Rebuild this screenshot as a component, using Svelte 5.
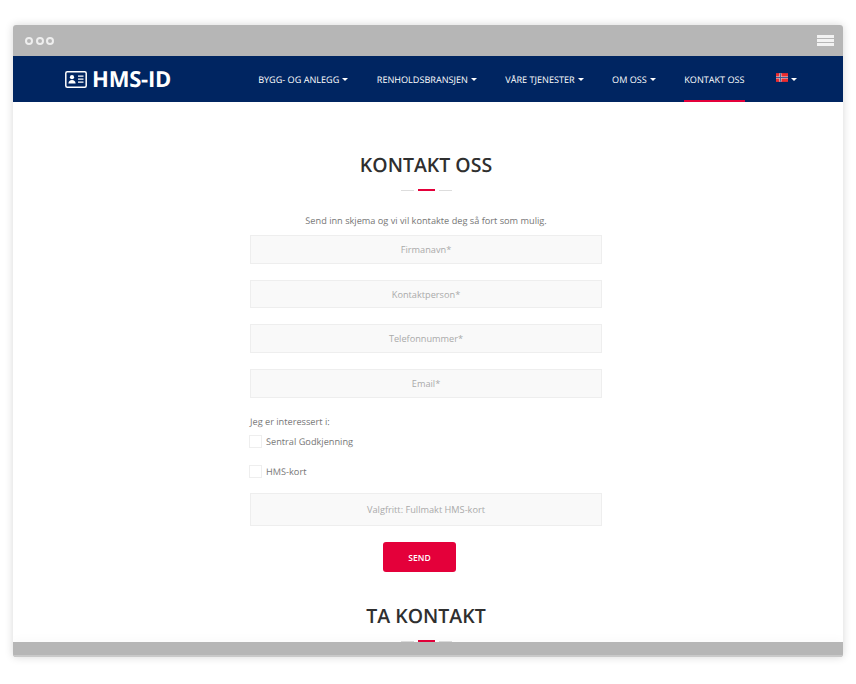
<script>
    const menu = [
        { label: 'BYGG- OG ANLEGG', caret: true },
        { label: 'RENHOLDSBRANSJEN', caret: true },
        { label: 'VÅRE TJENESTER', caret: true },
        { label: 'OM OSS', caret: true },
        { label: 'KONTAKT OSS', active: true }
    ]
    const fields = ['Firmanavn*', 'Kontaktperson*', 'Telefonnummer*', 'Email*']
    const checks = ['Sentral Godkjenning', 'HMS-kort']
</script>

<div class="frame">
    <div class="chrome">
        <div class="dots"><span></span><span></span><span></span></div>
        <div class="bars"><span></span><span></span><span></span></div>
    </div>

    <nav class="nav">
        <div class="logo">
            <svg class="logo__icon" viewBox="0 0 22 17" width="22" height="17">
                <rect x="0.8" y="0.8" width="20.4" height="15.4" rx="1.5" fill="none" stroke="#fff" stroke-width="1.5"/>
                <circle cx="7" cy="6.2" r="2.1" fill="#fff"/>
                <path d="M3.4 12.6c0-2.4 1.5-3.6 3.6-3.6s3.6 1.2 3.6 3.6z" fill="#fff"/>
                <path d="M13 5.2h5.5M13 8.2h5.5M13 11.2h5.5" stroke="#fff" stroke-width="1.3"/>
            </svg>
            <span class="logo__text">HMS-ID</span>
        </div>
        <ul class="menu">
            {#each menu as item}
                <li class="menu__item" class:active={item.active}>
                    {item.label}
                    {#if item.caret}<i class="caret"></i>{/if}
                </li>
            {/each}
            <li class="menu__item">
                <svg class="flag" viewBox="0 0 22 16" width="12" height="9">
                    <rect width="22" height="16" fill="#ef2b2d"/>
                    <path d="M6 0h4v16H6zM0 6h22v4H0z" fill="#d9dde6"/>
                    <path d="M7 0h2v16H7zM0 7h22v2H0z" fill="#3b5a94"/>
                </svg>
                <i class="caret"></i>
            </li>
        </ul>
    </nav>

    <main class="content">
        <h2 class="title first">KONTAKT OSS</h2>
        <div class="rule"><span></span><span class="red"></span><span></span></div>
        <p class="lead">Send inn skjema og vi vil kontakte deg så fort som mulig.</p>

        <form class="form" on:submit|preventDefault>
            {#each fields as field}
                <input class="field" type="text" placeholder={field}>
            {/each}
            <p class="interest">Jeg er interessert i:</p>
            {#each checks as check}
                <label class="check"><input type="checkbox"><span>{check}</span></label>
            {/each}
            <input class="field field--tall" type="text" placeholder="Valgfritt: Fullmakt HMS-kort">
            <button class="send" type="submit">SEND</button>
        </form>

        <h2 class="title second">TA KONTAKT</h2>
        <div class="rule"><span></span><span class="red"></span><span></span></div>
    </main>

    <div class="bottom"></div>
</div>

<style>
    :global(body) {
        background: #fff;
    }
    .frame {
        display: flex;
        flex-direction: column;
        box-sizing: border-box;
        width: 830px;
        height: 632px;
        margin: 25px 0 27px 13px;
        border-radius: 3px;
        overflow: hidden;
        box-shadow: 0 0 8px rgba(0, 0, 0, 0.16);
        font-family: "Open Sans", sans-serif;
        text-rendering: geometricPrecision;
        background: #fff;
    }
    .chrome {
        display: flex;
        align-items: center;
        justify-content: space-between;
        flex: 0 0 31px;
        padding: 0 9px 0 12px;
        background: #b6b6b6;
    }
    .dots {
        display: flex;
        gap: 2.5px;
    }
    .dots span {
        box-sizing: border-box;
        width: 8px;
        height: 8px;
        border: 2px solid #eee;
        border-radius: 50%;
    }
    .bars {
        display: flex;
        flex-direction: column;
        gap: 1px;
    }
    .bars span {
        width: 17px;
        height: 3px;
        background: #f2f2f2;
    }
    .nav {
        display: flex;
        align-items: center;
        justify-content: space-between;
        flex: 0 0 46px;
        padding: 0 46px 0 52px;
        background: #002561;
        color: #fff;
    }
    .logo {
        display: flex;
        align-items: center;
        gap: 5px;
    }
    .logo__text {
        font-size: 22px;
        font-weight: 700;
        letter-spacing: -0.2px;
    }
    .menu {
        display: flex;
        gap: 28.5px;
        height: 100%;
        margin: 0;
        padding: 0;
        list-style: none;
    }
    .menu__item {
        display: flex;
        align-items: center;
        gap: 3px;
        box-sizing: border-box;
        height: 100%;
        font-size: 9.1px;
        font-weight: 500;
        white-space: nowrap;
    }
    .menu__item.active {
        border-bottom: 2px solid #e4003a;
        padding-top: 2px;
        margin-right: 3px;
    }
    .caret {
        width: 0;
        height: 0;
        border-top: 3px solid #fff;
        border-left: 3px solid transparent;
        border-right: 3px solid transparent;
    }
    .flag {
        margin-top: -3px;
    }
    .content {
        flex: 1;
        min-height: 0;
        padding-right: 4px;
        overflow: hidden;
        text-align: center;
    }
    .title {
        margin: 0;
        font-size: 19.5px;
        line-height: 27px;
        font-weight: 600;
        color: #2f2f2f;
    }
    .title.first {
        padding-top: 49px;
    }
    .title.second {
        padding-top: 30px;
    }
    .rule {
        display: flex;
        justify-content: center;
        align-items: center;
        gap: 4px;
        margin-top: 11px;
    }
    .rule span {
        width: 13px;
        height: 1px;
        background: #ddd;
    }
    .rule .red {
        width: 17px;
        height: 2px;
        background: #e4003a;
    }
    .lead {
        margin: 22px 0 7px;
        font-size: 9.2px;
        line-height: 15px;
        color: #777;
    }
    .form {
        display: flex;
        flex-direction: column;
        align-items: flex-start;
        width: 352px;
        margin: 0 auto;
    }
    .field {
        box-sizing: border-box;
        width: 100%;
        height: 28.7px;
        margin-bottom: 16px;
        padding: 0 8px;
        border: 1px solid #eee;
        background: #f9f9f9;
        font-family: inherit;
        font-size: 9.2px;
        text-align: center;
    }
    .field::placeholder {
        color: #aaa;
        opacity: 1;
    }
    .field--tall {
        height: 33px;
    }
    .interest {
        margin: 0 0 5px;
        font-size: 9.2px;
        line-height: 15px;
        color: #777;
    }
    .check {
        display: flex;
        align-items: center;
        gap: 4px;
        height: 15px;
        margin: 0 0 14.8px -1px;
        font-size: 9.2px;
        color: #777;
    }
    .check input {
        appearance: none;
        box-sizing: border-box;
        width: 13px;
        height: 13px;
        margin: 0;
        border: 1px solid #eee;
        background: #fff;
    }
    .send {
        align-self: center;
        width: 73px;
        height: 30px;
        margin-left: -13px;
        border: none;
        border-radius: 3px;
        background: #e4003a;
        color: #fff;
        font-family: inherit;
        font-size: 8.5px;
        font-weight: 600;
    }
    .bottom {
        position: relative;
        box-sizing: border-box;
        flex: 0 0 15px;
        border-bottom: 2px solid #c9c9c9;
        background: #b6b6b6;
        box-shadow: 0 -4px 8px rgba(0, 0, 0, 0.02);
    }
</style>
